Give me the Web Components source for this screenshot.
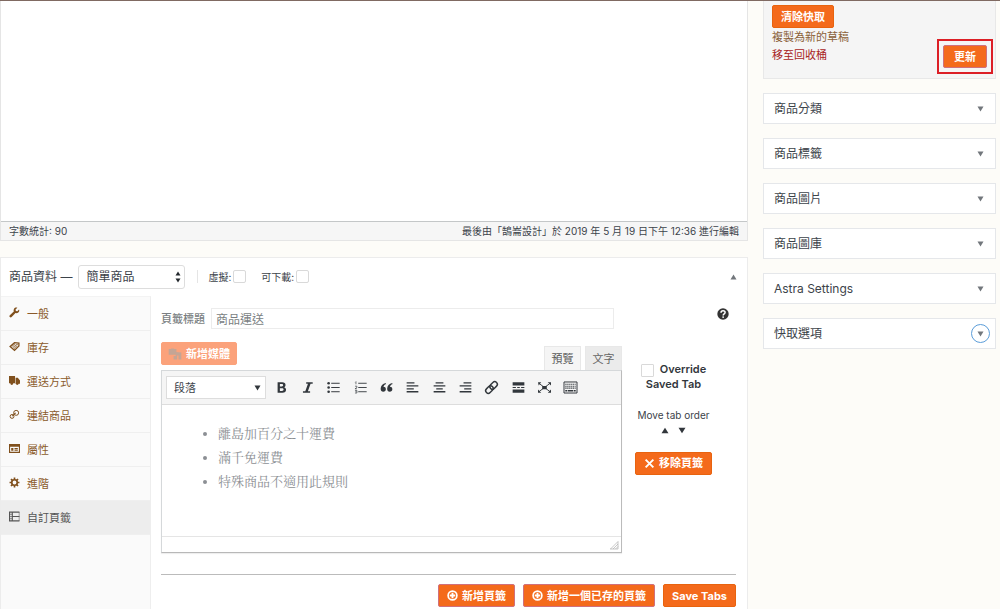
<!DOCTYPE html>
<html lang="zh-Hant">
<head>
<meta charset="utf-8">
<meta name="viewport" content="width=device-width, initial-scale=1">
<title>編輯商品</title>
<style>
html { height: 100%; }
body { margin: 0; min-height: 100%; background: #fdfcf8; color: #3c434a; font: 12px/16px Inter, "Noto Sans CJK TC", sans-serif; display: flex; flex-direction: column; }
</style>
</head>
<body>
<admin-page>
  <post-editor>
    <span slot="count">字數統計: 90</span>
    <span slot="edited">最後由「鵠崙設計」於 2019 年 5 月 19 日下午 12:36 進行編輯</span>
  </post-editor>
  <product-data>
    <nav-tab slot="nav" icon="wrench">一般</nav-tab>
    <nav-tab slot="nav" icon="tag">庫存</nav-tab>
    <nav-tab slot="nav" icon="truck">運送方式</nav-tab>
    <nav-tab slot="nav" icon="chain">連結商品</nav-tab>
    <nav-tab slot="nav" icon="card">屬性</nav-tab>
    <nav-tab slot="nav" icon="gear">進階</nav-tab>
    <nav-tab slot="nav" icon="layout" active>自訂頁籤</nav-tab>
    <tab-title-row></tab-title-row>
    <tab-fields>
      <rich-editor>
        <li>離島加百分之十運費</li>
        <li>滿千免運費</li>
        <li>特殊商品不適用此規則</li>
      </rich-editor>
      <tab-options slot="options"></tab-options>
    </tab-fields>
    <action-button slot="actions" icon="plus" ring>新增頁籤</action-button>
    <action-button slot="actions" icon="plus" ring>新增一個已存的頁籤</action-button>
    <action-button slot="actions">Save Tabs</action-button>
  </product-data>
  <publish-box slot="side"></publish-box>
  <side-box slot="side">商品分類</side-box>
  <side-box slot="side">商品標籤</side-box>
  <side-box slot="side">商品圖片</side-box>
  <side-box slot="side">商品圖庫</side-box>
  <side-box slot="side">Astra Settings</side-box>
  <side-box slot="side" focused>快取選項</side-box>
</admin-page>

<script>
const reset = `<style>*,:host{box-sizing:border-box} button,input,select{font:inherit;color:inherit;margin:0} button{border:0;background:none;padding:0}</style>`;

function define(name, html, setup) {
  const template = document.createElement('template');
  template.innerHTML = reset + html;
  customElements.define(name, class extends HTMLElement {
    constructor() {
      super();
      this.attachShadow({ mode: 'open' }).append(template.content.cloneNode(true));
    }
    connectedCallback() { if (setup) setup(this, this.shadowRoot); }
  });
}

const s = 'fill="none" stroke="currentColor"';
const icons = {
  wrench: '<path d="M18.3 4.4l-3.2 3.2-2.6-.4-.6-2.7 3.3-3.1c-2.4-.8-5 .1-6.200 2.300-.8 1.400-.9 3-.3 4.400L1.500 15c-1 1-.9 2.500 0 3.300.9.900 2.400.900 3.300 0l7-7.200c2 .6 4.200 0 5.600-1.500 1.300-1.400 1.600-3.500.9-5.200z"/>',
  tag: `<path d="M2 10l8-7 8 1v5l-8 8z" ${s} stroke-width="2.400"/><path d="M5 10l6-5M7 12l7-6M9 14l6-6" ${s} stroke-width="1.600"/><circle cx="15" cy="6" r="1"/>`,
  truck: '<path d="M0 2h11v13H0zM12 5h4l4 5v6h-8z"/><circle cx="5" cy="15.500" r="2.500"/><circle cx="15" cy="15.500" r="2.500"/>',
  chain: `<rect x="8.500" y="2.500" width="9" height="9" rx="4.500" ${s} stroke-width="1.800"/><rect x="2" y="10" width="7" height="7" rx="3.500" ${s} stroke-width="1.800"/><path d="M6 13l6-6" ${s} stroke-width="2"/>`,
  card: `<path d="M1 3h18v14H1z" ${s} stroke-width="2"/><path d="M1 3h18v4H1zM4 9h4v5H4zM10 9h6v2h-6zM10 12h6v2h-6z"/>`,
  gear: `<circle cx="10" cy="10" r="5" ${s} stroke-width="3"/><path d="M10 1v4M10 15v4M1 10h4M15 10h4M3.600 3.600l3 3M13.400 13.400l3 3M3.600 16.400l3-3M13.400 6.600l3-3" ${s} stroke-width="3"/>`,
  layout: `<path d="M19 2H1v16h18M6 2v16M6 10h13" ${s} stroke-width="2"/><path d="M18.500 2v16" ${s}/><path d="M1 6h5M1 10h5M1 14h5" ${s} stroke-width="1.200"/>`,
  plus: `<circle cx="10" cy="10" r="8" ${s} stroke-width="3"/><path d="M10 5v10M5 10h10" ${s} stroke-width="3.400"/>`,
  cross: `<path d="M3 3l14 14M17 3L3 17" ${s} stroke-width="3.500"/>`,
  media: '<path d="M1 3h3l1-1h3l1 1h3v8H1z"/><path d="M11 7l8 1v10h-4v-6h-2v6H8v-5h3z"/>',
  help: '<circle cx="10" cy="10" r="9.500"/><path d="M6.700 8c0-4.500 6.800-4.500 6.800-.500 0 2.500-3.200 2.200-3.200 5" fill="none" stroke="#fff" stroke-width="2.500"/><circle cx="10.200" cy="15.200" r="1.500" fill="#fff"/>',
  bold: '<path fill-rule="evenodd" d="M4 2h7c3.500 0 5.200 1.600 5.200 4 0 1.800-.9 3-2.400 3.500 2 .5 3.200 1.800 3.200 3.900 0 3-2 4.600-5.400 4.600H4zM7.500 4.800v3.500h2.800c1.500 0 2.200-.6 2.200-1.700s-.7-1.800-2.200-1.800zM7.500 11v4.200h3.200c1.700 0 2.500-.7 2.500-2.100S12.300 11 10.600 11z"/>',
  italic: '<path d="M8 2h10v2.200h-3.300L10.600 15.800H14V18H3v-2.200h3.600L10.700 4.200H8z"/>',
  ul: `<circle cx="2.500" cy="3.500" r="2"/><circle cx="2.500" cy="10" r="2"/><circle cx="2.500" cy="16.500" r="2"/><path d="M6.500 3.500h13M6.500 10h13M6.500 16.500h13" ${s} stroke-width="1.500"/>`,
  ol: `<path d="M3 1v4M2 2l1-1M1.500 8h3v2l-3 2h3M1.500 14.500h3v4h-3M2 16.500h2" ${s}/><path d="M6.500 3.500h13M6.500 10h13M6.500 16.500h13" ${s} stroke-width="1.400"/>`,
  quote: '<path d="M9 3C4 4 1 7.500 1 12c0 3 1.600 4.500 4 4.500s4-1.600 4-3.900S7.400 9 5.300 9C5.700 7 7 5.500 9 5zM19 3c-5 1-8 4.500-8 9 0 3 1.600 4.500 4 4.500s4-1.600 4-3.900S17.400 9 15.300 9c.4-2 1.700-3.500 3.700-4z"/>',
  left: `<path d="M1 3h12M1 7.500h18M1 12h11M1 16.500h18" ${s} stroke-width="2"/>`,
  center: `<path d="M4 3h12M1 7.500h18M5 12h10M1 16.500h18" ${s} stroke-width="2"/>`,
  right: `<path d="M7 3h12M1 7.500h18M8 12h11M1 16.500h18" ${s} stroke-width="2"/>`,
  link: `<g transform="rotate(-45 10 10)" ${s} stroke-width="2.200"><rect x="-1" y="6" width="13" height="8" rx="4"/><rect x="8" y="6" width="13" height="8" rx="4"/></g>`,
  more: `<path d="M1 2h18v5H1zM1 13h18v5H1z"/><path d="M1 10h5M8 10h4M14 10h5" ${s} stroke-width="1.600"/>`,
  full: `<path d="M6.500 7.500h7v5h-7zM0 2h5L1 7zM20 2v5l-5-5zM0 18v-5l5 5zM20 18h-5l5-5z"/><path d="M2 4l16 12M18 4L2 16" ${s} stroke-width="1.400"/>`,
  keys: `<path d="M0 1.500h20v17H0z" ${s} stroke-width="1.500"/><path d="M2 5h16M2 8h16M2 11h16" ${s} stroke-width="1.700" stroke-dasharray="2 1"/><path d="M2 15h3M6 15h8M15 15h3" ${s} stroke-width="2"/>`,
  up: '<path d="M10 2l10 16H0z"/>',
  down: '<path d="M0 2h20L10 18z"/>',
  grip: `<path d="M3 18L18 3M8 18L18 8M13 18l5-5M2 18h16V3" ${s} stroke-width="1.300"/>`
};

define('svg-icon', `<style>:host{display:block;flex:none;width:12px;height:12px} svg{display:block;width:100%;height:100%;overflow:visible}</style><svg viewBox="0 0 20 20" fill="currentColor" aria-hidden="true"></svg>`,
  (el, root) => { root.querySelector('svg').innerHTML = icons[el.getAttribute('name')] || ''; });

define('action-button', `<style>
  :host{display:block}
  button{display:flex;align-items:center;justify-content:center;gap:4px;width:100%;height:23px;padding:0 8px;border:1px solid #e8630f;border-radius:2px;background:#f46a1b;color:#fff;font-size:11px;line-height:16px;font-weight:700;white-space:nowrap}
  svg-icon{width:11px;height:11px}
  :host(:not([icon])) svg-icon{display:none}
  :host([ring]) button{border-color:#d0707c}
  :host([faded]) button{padding:0 6px;background:#fba27b;border-color:#fba27b}
  :host([faded]) svg-icon{width:14px;height:14px;color:#c4a595}
</style><button type="button"><svg-icon></svg-icon><slot></slot></button>`,
  (el, root) => { const i = root.querySelector('svg-icon'); i.setAttribute('name', el.getAttribute('icon') || ''); i.connectedCallback(); });

define('admin-page', `<style>
  :host{display:grid;flex:1;grid-template-columns:minmax(0,1fr) 233px;column-gap:15px;padding-right:4px;border-top:1px solid #806a62}
  main{display:flex;flex-direction:column;gap:16px;min-width:0}
  aside{display:flex;flex-direction:column;gap:14px}
</style><main><slot></slot></main><aside><slot name="side"></slot></aside>`);

define('post-editor', `<style>
  :host{display:block;border:1px solid #e5e5e5;border-top:0;background:#fff}
  .canvas{height:221px;border-bottom:1px solid #c4c7c8}
  .status{display:flex;justify-content:space-between;height:18px;padding:0 8px;background:#f6f6f6;font-size:10px;line-height:18px}
</style><div class="canvas"></div><div class="status"><slot name="count"></slot><slot name="edited"></slot></div>`);

define('product-data', `<style>
  :host{display:flex;flex-direction:column;flex:1;border:1px solid #ececec;border-bottom:0;background:#fff}
  header{display:flex;align-items:center;height:38px;padding:0 9px 1px 8px;font-size:12px}
  header > label:first-child{margin-right:6px}
  .select{display:flex;align-items:center;position:relative}
  select{appearance:none;width:107px;height:24px;padding:0 7px;border:1px solid #ddd;border-radius:3px;background:#fff}
  .arrows{position:absolute;right:4px;display:grid;gap:2px;pointer-events:none;color:#23282d}
  .arrows svg-icon{width:6px;height:5px}
  .sep{width:1px;height:13px;margin:0 10px 0 12px;background:#e5e5e5}
  .check{display:flex;align-items:center;gap:2px;margin-right:15px;font-size:10px}
  .check input{appearance:none;width:13px;height:13px;border:1px solid #d9d9d9;border-radius:2px;background:#fff}
  .toggle{margin-left:auto;color:#72777c}
  .toggle svg-icon{width:7px;height:6px;margin-right:1px}
  .body{display:grid;flex:1;grid-template-columns:150px minmax(0,1fr)}
  nav{background:#fafafa;border-right:1px solid #eee;border-top:1px solid #f3f3f3}
  section{padding:12px 11px 2px 10px}
  footer{display:flex;justify-content:flex-end;gap:8px;margin-top:21px;padding-top:9px;border-top:1px solid #bbb}
</style>
<header>
  <label for="type">商品資料 —</label>
  <span class="select"><select id="type"><option>簡單商品</option></select><span class="arrows"><svg-icon name="up"></svg-icon><svg-icon name="down"></svg-icon></span></span>
  <span class="sep"></span>
  <label class="check">虛擬: <input type="checkbox"></label>
  <label class="check">可下載: <input type="checkbox"></label>
  <button class="toggle" type="button" aria-label="收合"><svg-icon name="up"></svg-icon></button>
</header>
<div class="body"><nav><slot name="nav"></slot></nav><section><slot></slot><footer><slot name="actions"></slot></footer></section></div>`);

define('nav-tab', `<style>
  :host{display:block;border-bottom:1px solid #efefef}
  a{display:flex;align-items:center;gap:7px;height:33px;padding:0 8px;color:#8a5a2b;font-size:11px;text-decoration:none}
  svg-icon{width:11px;height:11px;margin-bottom:2px;color:#80501d}
  :host([active]) a,:host([active]) svg-icon{color:#555}
  :host([active]) a{background:#ededed}
</style><a href="#"><svg-icon></svg-icon><slot></slot></a>`,
  (el, root) => { const i = root.querySelector('svg-icon'); i.setAttribute('name', el.getAttribute('icon')); i.connectedCallback(); });

define('tab-title-row', `<style>
  :host{display:flex;align-items:center;gap:6px;color:#7b7f83}
  label{font-size:11px;font-weight:500}
  input{flex:0 1 403px;min-width:0;height:21px;padding:0 4px;border:1px solid #ececec;background:#fff;font-size:12px}
  button{align-self:flex-start;margin:0 7px 0 auto;color:#333}
</style><label for="title">頁籤標題</label><input id="title" type="text" value="商品運送"><button type="button" aria-label="說明"><svg-icon name="help"></svg-icon></button>`);

define('tab-fields', `<style>
  :host{display:grid;grid-template-columns:minmax(0,461px) minmax(0,1fr);margin-top:13px}
</style><slot></slot><slot name="options"></slot>`);

define('rich-editor', `<style>
  :host{display:block}
  .top{display:flex;justify-content:space-between;align-items:flex-start;height:28px}
  .modes{display:flex;gap:4px;align-self:flex-end}
  .modes button{width:37px;height:24px;border:1px solid #e8e8e8;border-bottom:0;background:#ebebeb;font-size:11px;color:#666}
  .modes .on{background:#f5f5f5;color:#555}
  .box{border:1px solid #d5d8da;border-right-color:#bbb;border-bottom-color:#b8b8b8;background:#fff;box-shadow:0 1px 1px #0001}
  .bar{display:flex;align-items:center;gap:4px;height:34px;padding:0 4px;background:#f5f5f5;border-bottom:1px solid #ddd}
  .format{display:flex;align-items:center;position:relative}
  select{appearance:none;width:100px;height:23px;padding:0 7px;border:1px solid #ddd;border-radius:0;background:#fff;font-size:11px}
  .format svg-icon{position:absolute;right:5px;width:7px;height:6px;color:#32373c;pointer-events:none}
  .tools{display:flex;justify-content:space-between;flex:0 1 312px}
  .tools button{display:grid;place-items:center;width:22px;height:24px;color:#32373c}
  .tools svg-icon{width:13px;height:13px}
  .tools [name=keys]{width:15px;height:13px}
  ul{height:131px;margin:0;padding:17px 0 0 56px;color:#8c8f94;font:13px/24px "Liberation Serif","Noto Serif CJK TC","Noto Sans CJK TC",serif}
  .foot{display:flex;justify-content:flex-end;align-items:flex-end;height:16px;padding:2px;border-top:1px solid #e5e5e5;color:#aaa}
  .foot svg-icon{width:10px;height:10px}
</style>
<div class="top"><action-button icon="media" faded>新增媒體</action-button><div class="modes"><button class="on" type="button">預覽</button><button type="button">文字</button></div></div>
<div class="box">
  <div class="bar"><span class="format"><select aria-label="格式"><option>段落</option></select><svg-icon name="down"></svg-icon></span><div class="tools"></div></div>
  <ul><slot></slot></ul>
  <div class="foot"><svg-icon name="grip"></svg-icon></div>
</div>`,
  (el, root) => {
    root.querySelector('.tools').innerHTML = ['bold','italic','ul','ol','quote','left','center','right','link','more','full','keys']
      .map(n => `<button type="button" aria-label="${n}"><svg-icon name="${n}"></svg-icon></button>`).join('');
  });

define('tab-options', `<style>
  :host{display:flex;flex-direction:column;align-items:center;padding:20px 11px 0 0}
  label{width:76px;text-align:center;font-size:11px;line-height:14px;font-weight:600;color:#32373c}
  input{appearance:none;width:13px;height:13px;margin:0 6px 0 0;border:1px solid #d9d9d9;border-radius:1px;vertical-align:middle;background:#fff}
  p{margin:16px 0 0;font-size:10px;line-height:16px}
  .order{display:flex;gap:9px;margin:4px 0 18px;color:#32373c}
  .order svg-icon{width:8px;height:7px}
  .order button{display:block}
</style>
<label><input type="checkbox">Override Saved Tab</label>
<p>Move tab order</p>
<div class="order"><button type="button" aria-label="上移"><svg-icon name="up"></svg-icon></button><button type="button" aria-label="下移"><svg-icon name="down"></svg-icon></button></div>
<action-button icon="cross">移除頁籤</action-button>`);

define('publish-box', `<style>
  :host{display:flex;justify-content:space-between;align-items:flex-end;height:78px;padding:0 8px;border:1px solid #e8e8e8;border-top:0;background:#f5f5f5}
  .links{display:flex;flex-direction:column;align-items:flex-start;align-self:flex-start;padding-top:4px;font-size:11px;line-height:18px}
  a{color:#8a5f38;text-decoration:none}
  .trash{color:#a82424}
  .update{width:44px;margin-bottom:10px;outline:2px solid #dc1f26;outline-offset:4px}
</style>
<div class="links"><action-button>清除快取</action-button><a href="#">複製為新的草稿</a><a class="trash" href="#">移至回收桶</a></div>
<action-button class="update" ring>更新</action-button>`);

define('side-box', `<style>
  :host{display:flex;align-items:center;justify-content:space-between;height:31px;padding:0 5px 0 10px;border:1px solid #e5e7ea;background:#fff}
  h2{margin:0;font-size:12px;line-height:16px;font-weight:400}
  button{display:grid;place-items:center;width:19px;height:19px;border:1px solid transparent;border-radius:50%;color:#72777c}
  svg-icon{width:7px;height:6px}
  :host([focused]) button{border-color:#5b9dd9}
</style><h2><slot></slot></h2><button type="button" aria-label="展開"><svg-icon name="down"></svg-icon></button>`);
</script>
</body>
</html>
